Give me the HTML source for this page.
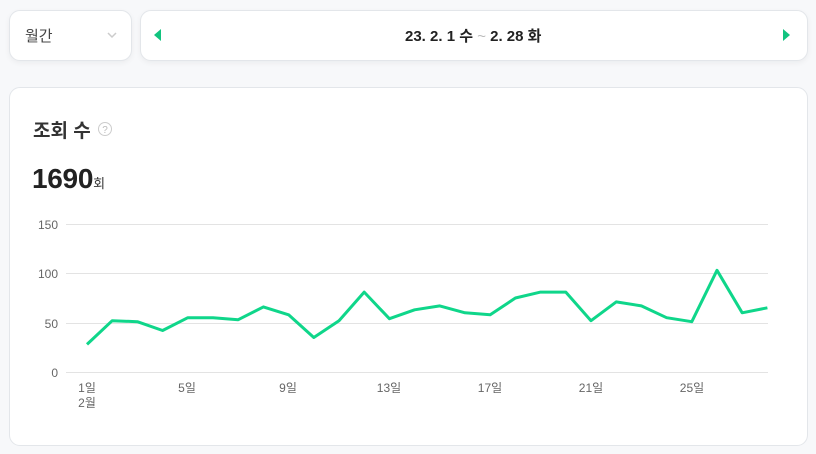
<!DOCTYPE html>
<html><head><meta charset="utf-8"><style>
body{margin:0;width:816px;height:454px;background:#f7f8fa;font-family:"Liberation Sans","Noto Sans CJK KR",sans-serif;position:relative;overflow:hidden}
.box{position:absolute;background:#fff;border:1px solid #e3e6ea;border-radius:11px;box-sizing:border-box;box-shadow:0 2px 6px rgba(0,0,0,0.05)}
.t{position:absolute;white-space:nowrap}
</style></head><body>
<div class="box" style="left:9px;top:10px;width:123px;height:51px"></div>
<div class="t" style="left:25px;top:25px;font-size:15px;color:#444">월간</div>
<svg style="position:absolute;left:106px;top:30px" width="12" height="10"><path d="M2 3 L6 7 L10 3" stroke="#ccc" stroke-width="1.5" fill="none"/></svg>
<div class="box" style="left:140px;top:10px;width:668px;height:51px"></div>
<svg style="position:absolute;left:152px;top:28px" width="10" height="14"><path d="M9 1 L2 7 L9 13Z" fill="#12c37f"/></svg>
<svg style="position:absolute;left:782px;top:28px" width="10" height="14"><path d="M1 1 L8 7 L1 13Z" fill="#12c37f"/></svg>
<div class="t" style="left:405px;top:25px;font-size:15px;font-weight:bold;color:#222">23. 2. 1 수 <span style="color:#bbb;font-weight:normal">~</span> 2. 28 화</div>
<div class="box" style="left:9px;top:87px;width:799px;height:359px;box-shadow:none"></div>
<div class="t" style="left:33px;top:116px;font-size:19px;font-weight:bold;color:#333">조회 수</div>
<svg style="position:absolute;left:97px;top:121px" width="16" height="16"><circle cx="8" cy="8" r="6.5" stroke="#ccc" fill="none"/><text x="8" y="12" font-size="10" text-anchor="middle" fill="#bbb" font-family="Liberation Sans">?</text></svg>
<div class="t" style="left:32px;top:163px;font-size:28px;font-weight:bold;color:#222;letter-spacing:-0.3px">1690<span style="font-size:13px;font-weight:normal;letter-spacing:0;color:#333">회</span></div>
<svg style="position:absolute;left:0;top:0" width="816" height="454" font-family="Liberation Sans,Noto Sans CJK KR,sans-serif">
<g stroke="#e3e3e3" stroke-width="1"><line x1="66" y1="224.5" x2="768" y2="224.5"/><line x1="66" y1="273.5" x2="768" y2="273.5"/><line x1="66" y1="323.5" x2="768" y2="323.5"/><line x1="66" y1="372.5" x2="768" y2="372.5"/></g>
<g font-size="12" fill="#666" text-anchor="end"><text x="58" y="229">150</text><text x="58" y="278">100</text><text x="58" y="328">50</text><text x="58" y="377">0</text></g>
<g font-size="12" fill="#666" text-anchor="middle"><text x="87" y="392">1일</text><text x="87" y="407">2월</text><text x="187" y="392">5일</text><text x="288" y="392">9일</text><text x="389" y="392">13일</text><text x="490" y="392">17일</text><text x="591" y="392">21일</text><text x="692" y="392">25일</text></g>
<polyline fill="none" stroke="#0fd68a" stroke-width="3" stroke-linejoin="round" points="87,344.4 112.2,320.7 137.4,321.7 162.6,330.5 187.8,317.7 213,317.7 238.2,319.7 263.4,306.9 288.6,314.8 313.8,337.5 339,320.7 364.2,292.1 389.4,318.7 414.6,309.8 439.8,305.9 465,312.8 490.2,314.8 515.4,298 540.6,292.1 565.8,292.1 591,320.7 616.2,301.9 641.4,305.9 666.6,317.7 691.8,321.7 717,270.3 742.2,312.8 767.4,307.8"/>
</svg>
</body></html>
